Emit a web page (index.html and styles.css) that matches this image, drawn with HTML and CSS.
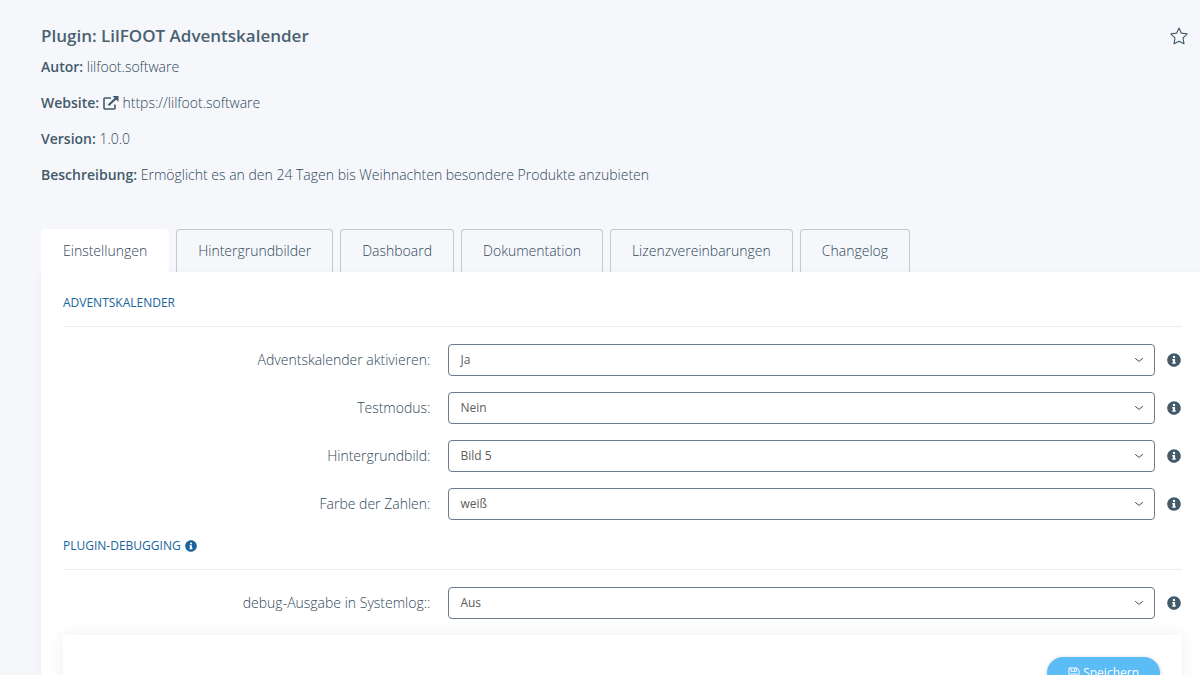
FILE: index.html
```
<!DOCTYPE html>
<html lang="de">
<head>
<meta charset="utf-8">
<title>Plugin: LilFOOT Adventskalender</title>
<link rel="stylesheet" href="styles.css">
</head>
<body>
<svg class="sprite" aria-hidden="true">
  <symbol id="info" viewBox="0 0 512 512"><path fill="currentColor" d="M256 8C119 8 8 119 8 256s111 248 248 248 248-111 248-248S393 8 256 8zm0 94a46 46 0 1 1 0 92 46 46 0 0 1 0-92zm64 276c0 7-5 12-12 12h-104c-7 0-12-5-12-12v-32c0-7 5-12 12-12h12v-56h-12c-7 0-12-5-12-12v-32c0-7 5-12 12-12h80c7 0 12 5 12 12v100h12c7 0 12 5 12 12z"/></symbol>
  <symbol id="chevron" viewBox="0 0 10 6"><path d="M1.5 1.5 L4.3 3.9 Q5 4.5 5.7 3.9 L8.5 1.5" fill="none" stroke="currentColor" stroke-width="1" stroke-linecap="round"/></symbol>
</svg>
<main class="page">
  <header class="header">
    <div class="details">
      <h1 class="title">Plugin: LilFOOT Adventskalender</h1>
      <p class="detail"><strong>Autor:</strong> lilfoot.software</p>
      <p class="detail"><strong>Website:</strong> <a class="link" href="https://lilfoot.software"><svg class="external" viewBox="0 0 16 14" aria-hidden="true"><path d="M8 2 H1.9 Q1 2 1 2.9 V12.1 Q1 13 1.9 13 H11.1 Q12 13 12 12.1 V8.5" fill="none" stroke="currentColor" stroke-width="1.6"/><path d="M5.5 9.3 L13 2.2" stroke="currentColor" stroke-width="2.2"/><path d="M9.6 0 H15.5 V5.9 Z" fill="currentColor"/></svg> https://lilfoot.software</a></p>
      <p class="detail"><strong>Version:</strong> 1.0.0</p>
      <p class="detail"><strong>Beschreibung:</strong> Ermöglicht es an den 24 Tagen bis Weihnachten besondere Produkte anzubieten</p>
    </div>
    <button class="favorite" type="button" aria-label="Favorit"><svg class="star" viewBox="0 0 18 18" aria-hidden="true"><path d="M9 1 L11.3 6.1 L17.2 6.8 L13 10.9 L14 16.8 L9 14.2 L4 16.8 L5 10.9 L.8 6.8 L6.7 6.1 Z" fill="none" stroke="currentColor" stroke-width="1.1" stroke-linejoin="round"/></svg></button>
  </header>
  <nav class="tabs">
    <a class="tab active" href="#einstellungen">Einstellungen</a>
    <a class="tab" href="#hintergrundbilder">Hintergrundbilder</a>
    <a class="tab" href="#dashboard">Dashboard</a>
    <a class="tab" href="#dokumentation">Dokumentation</a>
    <a class="tab" href="#lizenz">Lizenzvereinbarungen</a>
    <a class="tab" href="#changelog">Changelog</a>
  </nav>
  <form class="panel" id="einstellungen">
    <section class="section">
      <h2 class="heading">ADVENTSKALENDER</h2>
      <div class="row">
        <label class="label" for="aktiv">Adventskalender aktivieren:</label>
        <div class="field"><select class="select" id="aktiv"><option>Ja</option><option>Nein</option></select><svg class="chevron"><use href="#chevron"/></svg></div>
        <svg class="info"><use href="#info"/></svg>
      </div>
      <div class="row">
        <label class="label" for="test">Testmodus:</label>
        <div class="field"><select class="select" id="test"><option>Nein</option><option>Ja</option></select><svg class="chevron"><use href="#chevron"/></svg></div>
        <svg class="info"><use href="#info"/></svg>
      </div>
      <div class="row">
        <label class="label" for="bild">Hintergrundbild:</label>
        <div class="field"><select class="select" id="bild"><option>Bild 5</option></select><svg class="chevron"><use href="#chevron"/></svg></div>
        <svg class="info"><use href="#info"/></svg>
      </div>
      <div class="row">
        <label class="label" for="farbe">Farbe der Zahlen:</label>
        <div class="field"><select class="select" id="farbe"><option>weiß</option></select><svg class="chevron"><use href="#chevron"/></svg></div>
        <svg class="info"><use href="#info"/></svg>
      </div>
    </section>
    <section class="section">
      <h2 class="heading">PLUGIN-DEBUGGING <svg class="info small"><use href="#info"/></svg></h2>
      <div class="row">
        <label class="label" for="debug">debug-Ausgabe in Systemlog::</label>
        <div class="field"><select class="select" id="debug"><option>Aus</option><option>An</option></select><svg class="chevron"><use href="#chevron"/></svg></div>
        <svg class="info"><use href="#info"/></svg>
      </div>
    </section>
    <div class="actions">
      <button class="save" type="submit"><svg class="disk" viewBox="0 0 12 12" aria-hidden="true"><path d="M1 1 H8.8 L11 3.2 V11 H1 Z M3 1 V4.3 H8.3 V1 M6.6 1.5 V3.5 M3 11 V7 H9 V11" fill="none" stroke="currentColor" stroke-width="1"/></svg>Speichern</button>
    </div>
  </form>
</main>
</body>
</html>
```
FILE: styles.css
```
* { box-sizing: border-box; }
body {
  margin: 0;
  background: #f5f7fb;
  color: #2f485a;
  font: 300 14px/20px "Open Sans", "Noto Sans", sans-serif;
}
.sprite { position: absolute; width: 0; height: 0; }
.page { height: 100vh; overflow: hidden auto; scrollbar-width: none; padding: 24px 0 0 41px; }
.header { display: flex; justify-content: space-between; align-items: flex-start; padding-right: 12px; }
.title { margin: 0 0 9px; color: #4a6172; font-size: 17px; font-weight: 600; line-height: 24px; }
.detail { margin: 0 0 16px; }
.detail strong { color: #435a6b; font-weight: 600; }
.link { color: inherit; text-decoration: none; }
.external { width: 16px; height: 14px; vertical-align: -2px; color: #435a6b; }
.favorite { padding: 0; border: 0; background: none; color: #435a6b; margin-top: 3px; }
.star { display: block; width: 18px; height: 18px; }
.tabs { display: flex; gap: 7px; margin-top: 28px; }
.tab {
  height: 43px;
  padding: 11px 21px 0;
  border: 1px solid #c4c7cb;
  border-bottom: 0;
  border-radius: 4px 4px 0 0;
  color: inherit;
  text-decoration: none;
}
.tab.active { background: #fff; border-color: #fff; }
.panel { padding: 21px 18px 0 22px; background: #fff; box-shadow: 0 4px 12px rgba(50, 70, 110, .05); }
.heading {
  display: flex;
  align-items: center;
  gap: 4px;
  margin: 0 0 17px;
  padding-bottom: 13px;
  border-bottom: 1px solid #ebecf4;
  color: #1a659e;
  font-size: 12px;
  font-weight: 500;
  line-height: 20px;
}
.row { display: grid; grid-template-columns: 6fr 11fr 27px; align-items: center; margin-bottom: 16px; }
.label { padding-right: 18px; text-align: right; }
.field { display: grid; align-items: center; }
.select {
  grid-area: 1 / 1;
  width: 100%;
  height: 32px;
  padding: 0 11px;
  border: 1px solid #6c7a89;
  border-radius: 4px;
  appearance: none;
  background: #fff;
  color: #5c5c5c;
  font: 400 12px/20px "Open Sans", "Noto Sans", sans-serif;
}
.chevron { grid-area: 1 / 1; justify-self: end; width: 10px; height: 6px; margin-right: 11px; pointer-events: none; }
.info { justify-self: end; width: 14px; height: 14px; margin-right: 1px; color: #435a6b; }
.info.small { width: 12px; height: 12px; color: inherit; }
.actions {
  display: flex;
  justify-content: flex-end;
  padding: 22px 22px 20px;
  background: #fff;
  box-shadow: 0 0 16px rgba(0, 0, 0, .07);
}
.save {
  display: flex;
  align-items: center;
  justify-content: center;
  gap: 3px;
  padding: 6px 21px;
  border: 0;
  border-radius: 16px;
  background: #5cbcf6;
  box-shadow: 0 1px 4px rgba(0, 0, 0, .2);
  color: #fff;
  font: 400 12px/20px "Open Sans", "Noto Sans", sans-serif;
}
.disk { width: 12px; height: 12px; }
```
